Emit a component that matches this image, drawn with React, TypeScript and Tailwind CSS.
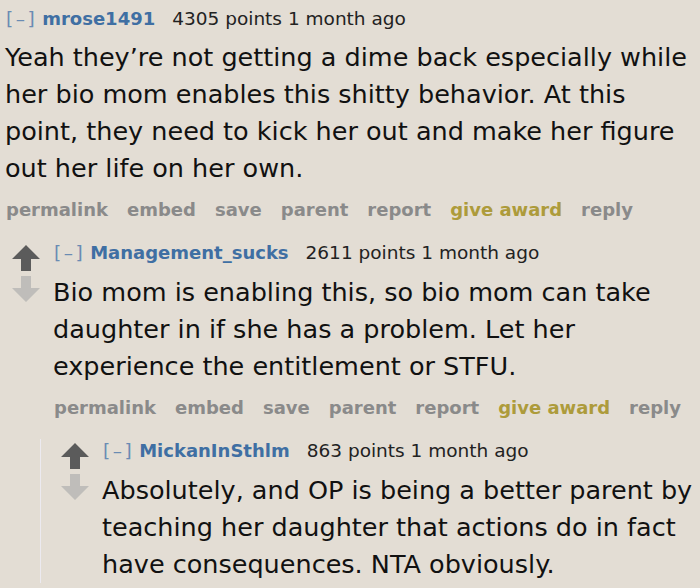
import React from "react";

type C = {
  author: string;
  points: number;
  body: string;
  children?: C[];
};

const thread: C = {
  author: "mrose1491",
  points: 4305,
  body:
    "Yeah they\u2019re not getting a dime back especially while her bio mom enables this shitty behavior. At this point, they need to kick her out and make her figure out her life on her own.",
  children: [
    {
      author: "Management_sucks",
      points: 2611,
      body:
        "Bio mom is enabling this, so bio mom can take daughter in if she has a problem. Let her experience the entitlement or STFU.",
      children: [
        {
          author: "MickanInSthlm",
          points: 863,
          body:
            "Absolutely, and OP is being a better parent by teaching her daughter that actions do in fact have consequences. NTA obviously.",
        },
      ],
    },
  ],
};

function UpArrow() {
  return (
    <svg width="28" height="26" viewBox="0 0 28 26">
      <path d="M14 0 L28 14 L19 14 L19 26 L9 26 L9 14 L0 14 Z" fill="#5b5b5b" />
    </svg>
  );
}

function DownArrow() {
  return (
    <svg width="28" height="26" viewBox="0 0 28 26">
      <path d="M9 0 L19 0 L19 12 L28 12 L14 26 L0 12 L9 12 Z" fill="#bfbdba" />
    </svg>
  );
}

const buttons = ["permalink", "embed", "save", "parent", "report", "give award", "reply"];

function Comment({ c, depth }: { c: C; depth: number }) {
  // the last reply's button row falls below the visible area, so it is left out
  const showButtons = depth < 2;
  return (
    <div className={depth === 2 ? "border-l border-[#eceaf0]" : ""}>
      <div className="flex">
        <div className="ml-[20px] flex w-[28px] shrink-0 flex-col gap-[5px] pt-[4px]">
          <UpArrow />
          <DownArrow />
        </div>
        <div className="ml-[13px] min-w-0 flex-1">
          <div className="flex h-[24px] items-center whitespace-nowrap text-[18.5px] leading-[24px] text-[#222]">
            <span className="ml-[1px] tracking-[2.5px] text-[#6a8bb3]">[–]</span>
            <span className="ml-[5px] text-[18px] font-bold text-[#3f6fa3]">{c.author}</span>
            <span className="ml-[17px]">{c.points} points 1 month ago</span>
          </div>
          <p
            className={
              (depth === 0 ? "mt-[8px]" : "mt-[9px]") +
              " text-[25.5px] leading-[37px] text-[#111]"
            }
          >
            {c.body}
          </p>
          {showButtons && (
            <div className="mt-[11px] ml-[1px] flex h-[24px] items-center gap-[19px] whitespace-nowrap text-[18px] font-bold leading-[24px] text-[#8a8a8a]">
              {buttons.map((b) => (
                <span key={b} className={"shrink-0 " + (b === "give award" ? "text-[#ad9b3b]" : "")}>
                  {b}
                </span>
              ))}
            </div>
          )}
        </div>
      </div>
      {c.children?.map((ch) => (
        <div key={ch.author} className="ml-[48px] mt-[19px]">
          <Comment c={ch} depth={depth + 1} />
        </div>
      ))}
    </div>
  );
}

export default function App() {
  return (
    <div
      className="h-[588px] w-[700px] overflow-hidden bg-[#e3ddd4] pt-[7px]"
      style={{ fontFamily: '"DejaVu Sans", Verdana, sans-serif' }}
    >
      <div className="ml-[-56px] w-[754px]">
        <Comment c={thread} depth={0} />
      </div>
    </div>
  );
}
